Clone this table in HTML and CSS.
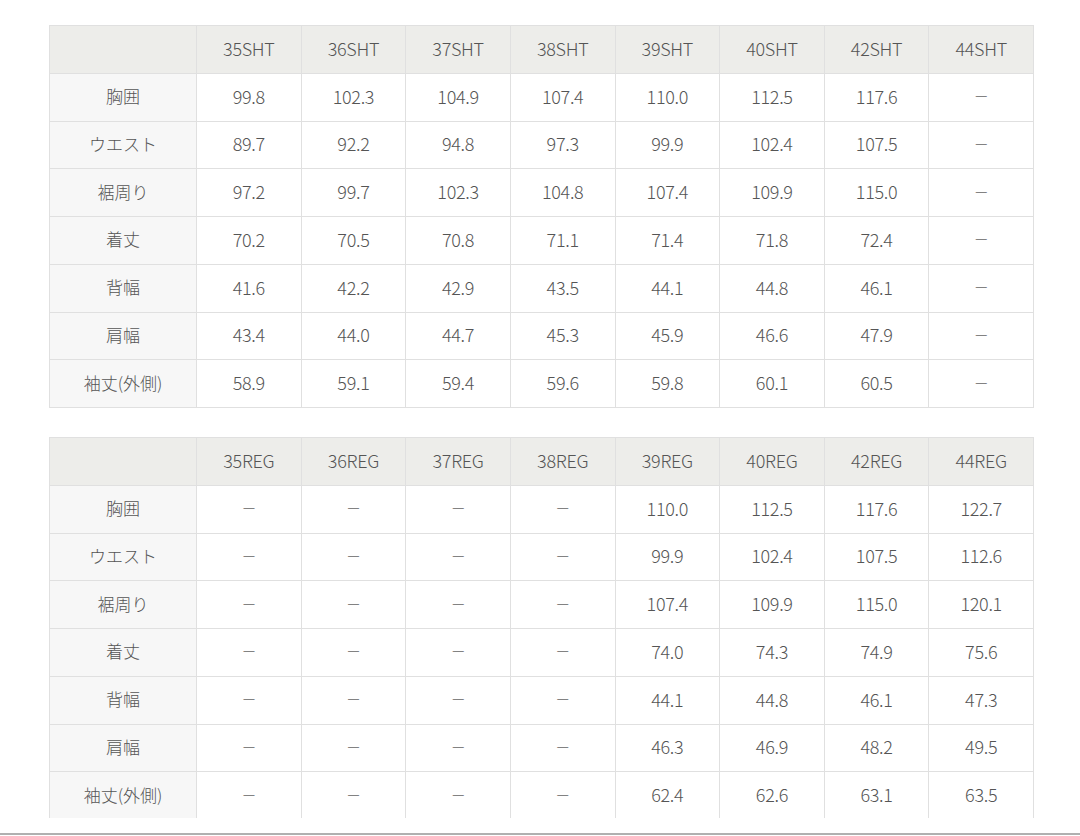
FILE: index.html
```html
<!DOCTYPE html>
<html lang="ja">
<head>
<meta charset="utf-8">
<link rel="stylesheet" href="styles.css">
</head>
<body>
<div class="page">
  <div class="clip">
    <table class="size">
      <tr class="head"><th class="label"></th><th>35SHT</th><th>36SHT</th><th>37SHT</th><th>38SHT</th><th>39SHT</th><th>40SHT</th><th>42SHT</th><th>44SHT</th></tr>
      <tr><th class="label">胸囲</th><td>99.8</td><td>102.3</td><td>104.9</td><td>107.4</td><td>110.0</td><td>112.5</td><td>117.6</td><td class="nil">－</td></tr>
      <tr><th class="label">ウエスト</th><td>89.7</td><td>92.2</td><td>94.8</td><td>97.3</td><td>99.9</td><td>102.4</td><td>107.5</td><td class="nil">－</td></tr>
      <tr><th class="label">裾周り</th><td>97.2</td><td>99.7</td><td>102.3</td><td>104.8</td><td>107.4</td><td>109.9</td><td>115.0</td><td class="nil">－</td></tr>
      <tr><th class="label">着丈</th><td>70.2</td><td>70.5</td><td>70.8</td><td>71.1</td><td>71.4</td><td>71.8</td><td>72.4</td><td class="nil">－</td></tr>
      <tr><th class="label">背幅</th><td>41.6</td><td>42.2</td><td>42.9</td><td>43.5</td><td>44.1</td><td>44.8</td><td>46.1</td><td class="nil">－</td></tr>
      <tr><th class="label">肩幅</th><td>43.4</td><td>44.0</td><td>44.7</td><td>45.3</td><td>45.9</td><td>46.6</td><td>47.9</td><td class="nil">－</td></tr>
      <tr><th class="label">袖丈(外側)</th><td>58.9</td><td>59.1</td><td>59.4</td><td>59.6</td><td>59.8</td><td>60.1</td><td>60.5</td><td class="nil">－</td></tr>
    </table>
    <table class="size second">
      <tr class="head"><th class="label"></th><th>35REG</th><th>36REG</th><th>37REG</th><th>38REG</th><th>39REG</th><th>40REG</th><th>42REG</th><th>44REG</th></tr>
      <tr><th class="label">胸囲</th><td class="nil">－</td><td class="nil">－</td><td class="nil">－</td><td class="nil">－</td><td>110.0</td><td>112.5</td><td>117.6</td><td>122.7</td></tr>
      <tr><th class="label">ウエスト</th><td class="nil">－</td><td class="nil">－</td><td class="nil">－</td><td class="nil">－</td><td>99.9</td><td>102.4</td><td>107.5</td><td>112.6</td></tr>
      <tr><th class="label">裾周り</th><td class="nil">－</td><td class="nil">－</td><td class="nil">－</td><td class="nil">－</td><td>107.4</td><td>109.9</td><td>115.0</td><td>120.1</td></tr>
      <tr><th class="label">着丈</th><td class="nil">－</td><td class="nil">－</td><td class="nil">－</td><td class="nil">－</td><td>74.0</td><td>74.3</td><td>74.9</td><td>75.6</td></tr>
      <tr><th class="label">背幅</th><td class="nil">－</td><td class="nil">－</td><td class="nil">－</td><td class="nil">－</td><td>44.1</td><td>44.8</td><td>46.1</td><td>47.3</td></tr>
      <tr><th class="label">肩幅</th><td class="nil">－</td><td class="nil">－</td><td class="nil">－</td><td class="nil">－</td><td>46.3</td><td>46.9</td><td>48.2</td><td>49.5</td></tr>
      <tr><th class="label">袖丈(外側)</th><td class="nil">－</td><td class="nil">－</td><td class="nil">－</td><td class="nil">－</td><td>62.4</td><td>62.6</td><td>63.1</td><td>63.5</td></tr>
    </table>
  </div>
  <div class="rule"></div>
</div>
</body>
</html>
```

FILE: styles.css
```css
html, body {
  margin: 0;
  padding: 0;
  background: #fff;
}
.page {
  width: 1080px;
  height: 836px;
  overflow: hidden;
}
.clip {
  height: 818px;
  overflow: hidden;
  padding: 25px 0 0 49px;
  box-sizing: border-box;
}
.size {
  width: 985px;
  table-layout: fixed;
  border-collapse: separate;
  border-spacing: 0;
  border-top: 1px solid #e0e0e0;
  border-left: 1px solid #e0e0e0;
  font-family: "Noto Sans CJK JP", "Liberation Sans", sans-serif;
  font-size: 18px;
  font-weight: 300;
  color: #555;
  letter-spacing: -0.3px;
}
.size.second {
  margin-top: 29px;
}
.size th, .size td {
  height: 47.75px;
  padding: 0 0 3px 0;
  box-sizing: border-box;
  text-align: center;
  vertical-align: middle;
  border-right: 1px solid #e0e0e0;
  border-bottom: 1px solid #e0e0e0;
  font-weight: 300;
  background: #fff;
}
.size th.label {
  width: 147px;
  background: #f7f7f7;
  font-size: 17px;
  letter-spacing: 0;
}
.size tr.head th {
  background: #ededea;
}
.size td.nil {
  font-size: 15px;
  color: #666;
}
.rule {
  margin-top: 15px;
  height: 2px;
  background: #b0b0b0;
}
```
